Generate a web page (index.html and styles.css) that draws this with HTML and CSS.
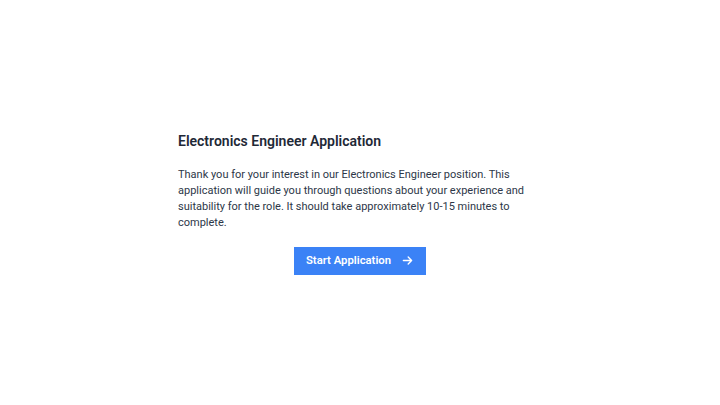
FILE: index.html
```html
<!DOCTYPE html>
<html lang="en">
<head>
    <meta charset="UTF-8">
    <meta name="viewport" content="width=device-width, initial-scale=1.0">
    <title>Electronics Engineer Application</title>
    <link rel="stylesheet" href="styles.css">
</head>
<body>
    <div class="container">
        <h2>Electronics Engineer Application</h2>
        <p class="intro">Thank you for your interest in our Electronics Engineer position. This application will guide you through questions about your experience and suitability for the role. It should take approximately 10-15 minutes to complete.</p>
        <div class="actions">
            <button class="start-btn">
                Start Application
                <svg width="11" height="11" viewBox="0 0 16 16" fill="none" stroke="currentColor" stroke-width="2" stroke-linecap="round" stroke-linejoin="round">
                    <path d="M2 8h12M9 3l5 5-5 5"/>
                </svg>
            </button>
        </div>
    </div>
</body>
</html>
```

FILE: styles.css
```css
body {
    font-family: Roboto, "Liberation Sans", sans-serif;
    display: flex;
    justify-content: center;
    align-items: center;
    height: 100vh;
    margin: 0;
    background-color: #ffffff;
}
.container {
    width: 364px;
}
h2 {
    font-size: 14px;
    font-weight: 600;
    color: #1f2937;
    margin: 0 0 16px 0;
    line-height: 20px;
}
.intro {
    font-size: 11px;
    line-height: 16px;
    color: #2d3748;
    margin: 0 0 16px 0;
}
.actions {
    display: flex;
    justify-content: center;
}
.start-btn {
    display: flex;
    align-items: center;
    gap: 11px;
    height: 28px;
    padding: 0 13px 0 12px;
    background-color: #3b82f6;
    color: white;
    border: none;
    font-family: inherit;
    font-size: 11.3px;
    font-weight: 600;
    cursor: pointer;
}
.start-btn:hover {
    background-color: #2563eb;
}
```
